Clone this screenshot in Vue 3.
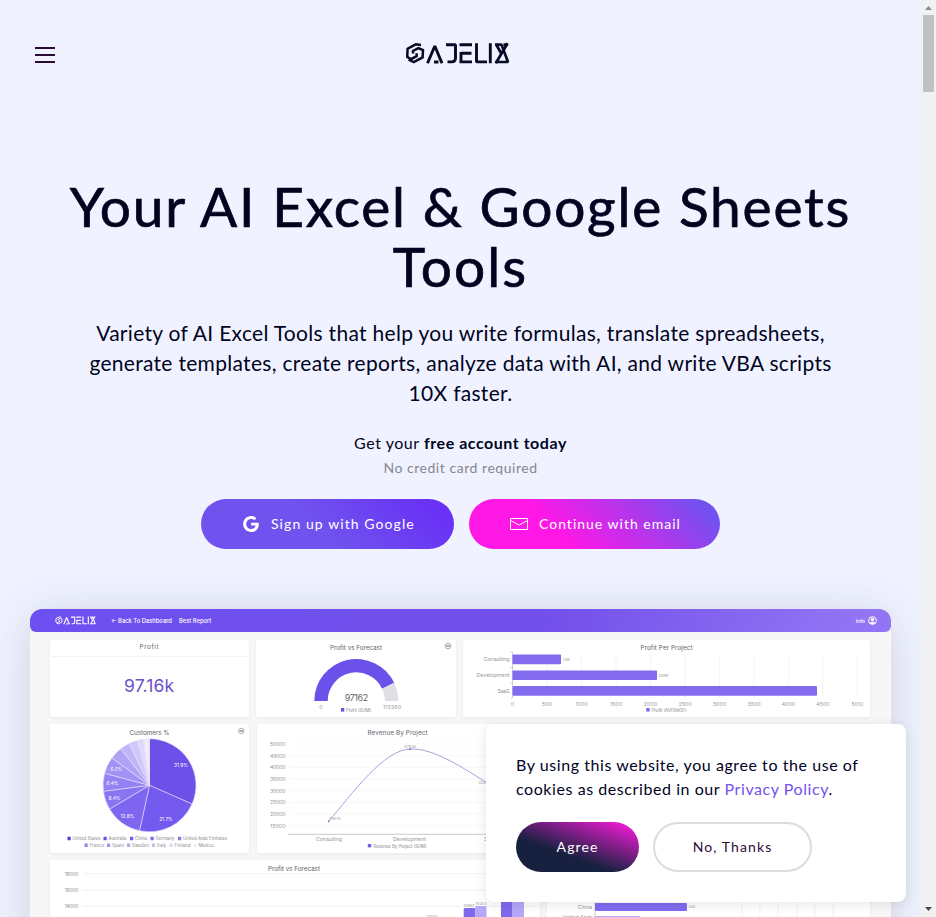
<script setup>
const polar = (cx, cy, r, deg) => {
  const a = ((deg - 90) * Math.PI) / 180
  return `${(cx + r * Math.cos(a)).toFixed(2)} ${(cy + r * Math.sin(a)).toFixed(2)}`
}

const pieStops = [0, 113.8, 192.4, 239.3, 262.6, 285, 306, 321.8, 334.2, 345, 352.5, 360]
const pieColors = ['#6c50e8', '#7459ee', '#7e66f0', '#8a74f1', '#9582f3', '#a292f4', '#b0a3f5', '#c0b5f7', '#d0c8f8', '#dfdaf9', '#eeebfc']
const slices = pieColors.map((color, i) => {
  const from = pieStops[i]
  const to = pieStops[i + 1]
  return { color, d: `M149.5 785.3L${polar(149.5, 785.3, 46.5, from)}A46.5 46.5 0 0 1 ${polar(149.5, 785.3, 46.5, to)}Z` }
})
const pieLabels = [
  { t: '31.9%', x: 181, y: 767 },
  { t: '21.7%', x: 166, y: 820.5 },
  { t: '12.8%', x: 127.5, y: 817.5 },
  { t: '8.4%', x: 114.5, y: 800 },
  { t: '6.4%', x: 112.5, y: 785 },
  { t: '6.0%', x: 116.5, y: 771 },
]
const pieLegend = [
  { t: 'United States', x: 67.5, y: 838.5, w: 28, c: '#5a3fd0' },
  { t: 'Australia', x: 103.5, y: 838.5, w: 18, c: '#6c50e8' },
  { t: 'China', x: 130, y: 838.5, w: 12, c: '#7459ee' },
  { t: 'Germany', x: 150.5, y: 838.5, w: 19, c: '#7e66f0' },
  { t: 'United Arab Emirates', x: 178, y: 838.5, w: 44, c: '#8a74f1' },
  { t: 'France', x: 84.5, y: 845.3, w: 15, c: '#9582f3' },
  { t: 'Spain', x: 107, y: 845.3, w: 12, c: '#a292f4' },
  { t: 'Sweden', x: 127, y: 845.3, w: 17, c: '#b0a3f5' },
  { t: 'Italy', x: 152, y: 845.3, w: 9, c: '#c6bdf7' },
  { t: 'Finland', x: 169.5, y: 845.3, w: 16, c: '#dcd8f6' },
  { t: 'Mexico', x: 193.5, y: 845.3, w: 15, c: '#eeecf8' },
]

const hBars = [
  { t: 'Consulting', y: 659.4, end: 561, v: '709', lw: 26 },
  { t: 'Development', y: 675.2, end: 657, v: '2099', lw: 33 },
  { t: 'SaaS', y: 690.9, end: 817, v: '', lw: 12 },
]
const hTicks = [0, 500, 1000, 1500, 2000, 2500, 3000, 3500, 4000, 4500, 5000].map((v) => ({ v: v === 5000 ? '500(' : v, x: 512.5 + v * 0.069 }))
const revTicks = [50000, 45000, 40000, 35000, 30000, 25000, 20000, 15000].map((v, i) => ({ v, y: 744 + i * 11.65 }))
const fcTicks = [18000, 16000, 14000].map((v, i) => ({ v, y: 873.7 + i * 16.3 }))
const fcGrid = [742, 760, 778, 797, 815, 833]
</script>

<template>
  <div class="window">
    <main class="page">
      <header class="site-header">
        <button class="menu" aria-label="Menu"><span></span><span></span><span></span></button>
        <svg class="logo" viewBox="0 0 105 24" width="105" height="24">
          <defs>
            <g id="ajelix" fill="none" stroke="currentColor">
              <path stroke-width="2.5" d="M16 2.900 10.800 2.300 2.600 6.700 2.200 14.800 5.900 17.200 11.600 14.200V11.200M8 11.600V8.900L13.400 6.100 18 8 17.600 15.400 8.800 20.100 3.600 17.600" />
              <path stroke-width="2.9" stroke-linejoin="bevel" d="M22.500 21.300 29.800 4 37 21.300M29 20H33.500M41 2.700H50.500V16Q50.500 19.900 46.500 19.900H42.500M54.500 2.700H67M56 11.300H66.500M54.500 19.900H67M56 10V19.900M71.500 1.300V19.900H82M85.300 1.300V21.300" />
              <path stroke-width="2.700" stroke-linejoin="bevel" d="M90 2.600H96.500L103 20H97M90.800 21.300 102.600 1.300M90 20H97M91.500 3 96 11M98.500 2.600H103" />
            </g>
          </defs>
          <use href="#ajelix" />
        </svg>
      </header>

      <section class="hero">
        <h1><span class="h-a">Your AI Excel &amp; Google Sheets</span><span class="h-b">Tools</span></h1>
        <p class="lead">
          <span class="l-a">Variety of AI Excel Tools that help you write formulas, translate spreadsheets,</span>
          <span class="l-b">generate templates, create reports, analyze data with AI, and write VBA scripts</span>
          <span class="l-c">10X faster.</span>
        </p>
        <p class="account">Get your <b>free account today</b></p>
        <p class="note">No credit card required</p>
        <div class="cta">
          <a class="btn google">
            <svg width="16" height="16" viewBox="0 0 24 24"><path fill="#fff" d="M12.240 10.285V14.400h6.806c-.275 1.765-2.056 5.174-6.806 5.174-4.095 0-7.439-3.389-7.439-7.574s3.345-7.574 7.439-7.574c2.330 0 3.891.989 4.785 1.849l3.254-3.138C18.189 1.186 15.479 0 12.240 0c-6.635 0-12 5.365-12 12s5.365 12 12 12c6.926 0 11.520-4.869 11.520-11.726 0-.788-.085-1.390-.189-1.989H12.240z" /></svg>
            <span>Sign up with Google</span>
          </a>
          <a class="btn email">
            <svg width="18" height="12" viewBox="0 0 18 12"><path d="M.5.5H17.5V11.5H.5ZM.8 2.6 9 7.2 17.2 2.6" fill="none" stroke="#fff" stroke-width="1" /></svg>
            <span>Continue with email</span>
          </a>
        </div>
      </section>

      <section class="board">
        <div class="board-bar">
          <svg class="mini-logo" viewBox="0 0 105 24" width="41" height="9.4"><use href="#ajelix" /></svg>
          <span class="back">← Back To Dashboard</span>
          <span class="rep">Best Report</span>
          <span class="info">Info</span>
          <svg class="avatar" width="9" height="9" viewBox="0 0 18 18"><circle cx="9" cy="9" r="7.8" fill="none" stroke="#fff" stroke-width="2" /><circle cx="9" cy="7" r="3.5" fill="#fff" /><path d="M3.5 14Q9 8.500 14.500 14L9 17Z" fill="#fff" /></svg>
        </div>
        <div class="cards">
          <div class="row r1">
            <svg class="card" viewBox="50 640 199 77" width="199" height="77">
              <path d="M51 656.5H249" stroke="#f3f3f5" />
              <text x="149" y="649" class="title" textLength="19">Profit</text>
              <text x="149" y="692" class="big" textLength="50">97.16k</text>
            </svg>
            <svg class="card" viewBox="256 640 200 77" width="200" height="77">
              <text x="356" y="649.7" class="title" textLength="52">Profit vs Forecast</text>
              <g fill="none" stroke="#8a8a92" stroke-width=".7"><circle cx="448" cy="646" r="2.8" /><path d="M446.400 646H449.700" stroke-width="1.400" /></g>
              <path :d="`M314.300 701A42 42 0 0 1 ${polar(356.300, 701, 42, 64.400)}L${polar(356.300, 701, 28.600, 64.400)}A28.600 28.600 0 0 0 327.700 701Z`" fill="#6c50ea" />
              <path :d="`M${polar(356.300, 701, 42, 64.400)}A42 42 0 0 1 398.300 701H384.900A28.600 28.600 0 0 0 ${polar(356.300, 701, 28.600, 64.400)}Z`" fill="#dfdfe4" />
              <text x="356.500" y="701" class="gauge" textLength="23.500">97162</text>
              <text x="321" y="709" class="ax">0</text>
              <text x="392" y="709" class="ax" textLength="18">113260</text>
              <rect x="341" y="708" width="3.300" height="3.600" fill="#6c50ea" />
              <text x="346" y="711.700" class="leg" textLength="25">Profit (SUM)</text>
            </svg>
            <svg class="card" viewBox="463 640 407 77" width="407" height="77">
              <text x="666.500" y="649.700" class="title" textLength="52">Profit Per Project</text>
              <path v-for="k in hTicks" :key="'g' + k.x" :d="`M${k.x} 655V697`" stroke="#f1f1f4" stroke-width=".8" />
              <path d="M512.500 652V698M510.500 652H512.500M510.500 667.500H512.500M510.500 683H512.500M510.500 698H512.500" stroke="#bbb" stroke-width=".7" fill="none" />
              <g v-for="b in hBars" :key="b.t">
                <rect x="512.500" :y="b.y - 4.800" :width="b.end - 512.500" height="9.600" rx="1" fill="#836bf0" />
                <text x="509.500" :y="b.y + 1.800" class="ax end" :textLength="b.lw">{{ b.t }}</text>
                <text :x="b.end + 1.500" :y="b.y + 1.500" class="tiny start">{{ b.v }}</text>
              </g>
              <text v-for="k in hTicks" :key="k.x" :x="k.x" y="705.500" class="ax">{{ k.v }}</text>
              <rect x="646.200" y="708" width="3.500" height="3.600" fill="#836bf0" />
              <text x="651.500" y="711.700" class="leg" textLength="35">Profit (AVERAGE)</text>
            </svg>
          </div>
          <div class="row r2">
            <svg class="card" viewBox="50 724 199 129" width="199" height="129">
              <text x="149.500" y="735" class="title" textLength="40">Customers %</text>
              <g fill="none" stroke="#8a8a92" stroke-width=".7"><circle cx="241.300" cy="731" r="2.700" /><path d="M239.800 731H242.900" stroke-width="1.500" /></g>
              <path v-for="s in slices" :key="s.d" :d="s.d" :fill="s.color" stroke="#e5e0fc" stroke-width=".6" />
              <text v-for="l in pieLabels" :key="l.t" :x="l.x" :y="l.y" class="plabel">{{ l.t }}</text>
              <g v-for="l in pieLegend" :key="l.t">
                <rect :x="l.x" :y="l.y - 1.700" width="3.200" height="3.400" rx=".5" :fill="l.c" />
                <text :x="l.x + 5" :y="l.y + 1.700" class="leg" :textLength="l.w">{{ l.t }}</text>
              </g>
            </svg>
            <svg class="card" viewBox="257 724 613 129" width="613" height="129">
              <text x="397.500" y="735" class="title" textLength="60">Revenue By Project</text>
              <g v-for="k in revTicks" :key="k.v">
                <path :d="`M290 ${k.y}H860`" stroke="#f3f3f5" stroke-width=".7" />
                <text x="285.500" :y="k.y + 2" class="ax end" textLength="15.500">{{ k.v }}</text>
              </g>
              <path d="M288 834.300H860" stroke="#bcbcc2" stroke-width=".8" />
              <path d="M328.500 821.500C352 794 384 749 411 749C433 748 464 768 490 785" fill="none" stroke="#a79fdb" stroke-width="1" />
              <circle cx="328.700" cy="821.300" r=".9" fill="#716a9c" /><circle cx="410" cy="749.200" r=".9" fill="#716a9c" />
              <text x="335" y="820" class="tiny">16674</text>
              <text x="410" y="747.500" class="tiny">47936</text>
              <text x="484" y="784" class="tiny">32587</text>
              <text x="329" y="841.300" class="ax" textLength="26">Consulting</text>
              <text x="409.500" y="841.300" class="ax" textLength="33">Development</text>
              <text x="490.500" y="841.300" class="ax" textLength="13">SaaS</text>
              <rect x="367.800" y="844" width="3.500" height="3.400" fill="#7563dd" />
              <text x="373.500" y="847.600" class="leg" textLength="53">Revenue By Project (SUM)</text>
            </svg>
          </div>
          <div class="row r3">
            <svg class="card" viewBox="50 860 490 80" width="490" height="80">
              <text x="294" y="871" class="title" textLength="52">Profit vs Forecast</text>
              <g v-for="k in fcTicks" :key="k.v">
                <path :d="`M83 ${k.y}H540`" stroke="#ededf0" stroke-width=".8" />
                <text x="78.500" :y="k.y + 1.900" class="ax end" textLength="14">{{ k.v }}</text>
              </g>
              <rect x="463.700" y="908" width="11.500" height="30" rx="1" fill="#7f68eb" />
              <rect x="475.200" y="906" width="11.300" height="30" rx="1" fill="#b5a7fa" />
              <rect x="501" y="900" width="11" height="30" fill="#7f68eb" />
              <rect x="512" y="898" width="12" height="30" fill="#b5a7fa" />
              <text x="469" y="907" class="tiny">13967</text>
              <text x="481" y="905" class="tiny">14054</text>
              <text x="432" y="917.500" class="tiny">12805</text>
            </svg>
            <svg class="card" viewBox="547 860 323 80" width="323" height="80">
              <path v-for="x in fcGrid" :key="x" :d="`M${x} 870V917`" stroke="#ededf1" stroke-width=".7" />
              <path d="M595 870V917" stroke="#bbb" stroke-width=".7" />
              <rect x="595" y="903" width="92" height="8" rx="1" fill="#836bf0" />
              <rect x="595" y="916" width="45" height="8" fill="#b5a7fa" />
              <text x="592" y="908.500" class="ax end">China</text>
              <text x="592" y="919" class="ax end">United Arab</text>
              <text x="688" y="908.300" class="tiny start">350</text>
            </svg>
          </div>
        </div>
      </section>
    </main>

    <aside class="cookie">
      <p><span class="c-a">By using this website, you agree to the use of</span><span class="c-b">cookies as described in our <a>Privacy Policy</a>.</span></p>
      <div class="actions"><button class="agree">Agree</button><button class="decline">No, Thanks</button></div>
    </aside>

    <div class="scrollbar">
      <svg width="7" height="4" viewBox="0 0 7 4"><path d="M0 4 3.500 0 7 4Z" fill="#8c8c8c" /></svg>
      <div class="thumb"></div>
      <svg class="down" width="7" height="4" viewBox="0 0 7 4"><path d="M0 0H7L3.500 4Z" fill="#484848" /></svg>
    </div>
  </div>
</template>

<style>
body {
  overflow: hidden;
  background: #f0f3ff;
}
</style>

<style scoped>
.window {
  position: relative;
  display: flex;
  width: 936px;
  height: 917px;
  overflow: hidden;
  background: #f0f3ff;
  color: #01031f;
  font-family: Lato, 'Liberation Sans', sans-serif;
}
.page {
  width: 921px;
  height: 917px;
  flex: none;
  overflow: hidden;
}
.site-header {
  display: grid;
  grid-template-columns: 20px 1fr 20px;
  align-items: center;
  height: 110px;
  padding: 0 35px;
  box-sizing: border-box;
}
.menu {
  display: flex;
  flex-direction: column;
  gap: 5px;
  padding: 0;
  border: 0;
  background: none;
}
.menu span {
  width: 20px;
  height: 2px;
  background: #2b0b36;
}
.logo {
  display: block;
  justify-self: center;
  margin: -2px 6px 0 0;
  color: #070a24;
}
.hero {
  display: flex;
  flex-direction: column;
  align-items: center;
  padding-top: 66px;
}
h1,
p {
  margin: 0;
  white-space: nowrap;
}
h1 span,
.lead span,
.cookie p span {
  display: block;
}
h1 {
  font-weight: 400;
  font-size: 55px;
  line-height: 60px;
  text-align: center;
  -webkit-text-stroke: 0.7px #01031f;
}
.h-a {
  letter-spacing: 1.8px;
}
.h-b {
  letter-spacing: 2.1px;
}
.lead {
  margin-top: 22px;
  font-size: 21px;
  line-height: 30px;
  text-align: center;
}
.l-a,
.l-b,
.l-c {
  letter-spacing: 0.3px;
}
.account {
  margin-top: 23px;
  font-size: 16px;
  line-height: 24px;
  letter-spacing: 0.54px;
}
.note {
  margin-top: 1px;
  font-size: 14px;
  line-height: 24px;
  letter-spacing: 0.54px;
  color: #85868f;
}
.cta {
  display: flex;
  gap: 15px;
  margin-top: 19px;
}
.btn {
  display: flex;
  align-items: center;
  height: 50px;
  box-sizing: border-box;
  border-radius: 25px;
  color: #fff;
  font-size: 14px;
  letter-spacing: 1px;
  white-space: nowrap;
}
.btn span {
  padding-bottom: 2px;
}
.google {
  width: 253px;
  padding-left: 42px;
  gap: 12px;
  letter-spacing: 1.08px;
  background: linear-gradient(45deg, #7053ee 45%, #6932f5 90%);
}
.email {
  width: 251px;
  padding-left: 41px;
  gap: 11px;
  background: linear-gradient(45deg, #ff17e6 35%, #7251f0 92%);
}
.board {
  width: 861px;
  height: 700px;
  margin: 60px 0 0 30px;
  border-radius: 12px 12px 0 0;
  background: #f7f7f8;
  box-shadow: 0 5px 50px rgba(50, 50, 80, 0.17);
}
.board-bar {
  display: flex;
  align-items: center;
  height: 23px;
  padding: 0 14px 0 25px;
  border-radius: 12px 12px 6px 6px;
  background: linear-gradient(100deg, #6d50f1 0%, #7350ea 60%, #9175f5 96%);
  color: #fff;
  font: 500 5.8px Inter, sans-serif;
}
.mini-logo {
  margin-right: 15px;
}
.back {
  width: 68px;
}
.info {
  margin-left: auto;
  margin-right: 3px;
  font-size: 5px;
}
.cards {
  display: flex;
  flex-direction: column;
  gap: 7px;
  padding: 8px 20px 0;
}
.row {
  display: flex;
  gap: 7px;
}
.r2 {
  gap: 8px;
}
.card {
  display: block;
  flex: none;
  border-radius: 3px;
  background: #fff;
  box-shadow: 0 1px 4px rgba(0, 0, 0, 0.06);
}
.card text {
  font-family: Inter, sans-serif;
  text-anchor: middle;
  fill: #98989e;
}
.card .title {
  font-size: 6.4px;
  fill: #66666c;
}
.card .big {
  font-size: 17.5px;
  fill: #6b51c9;
}
.card .gauge {
  font-size: 9px;
  fill: #66666a;
}
.card .ax {
  font-size: 5.3px;
}
.card .leg {
  font-size: 4.3px;
  text-anchor: start;
  fill: #85858c;
}
.card .tiny {
  font-size: 3.9px;
}
.card .end {
  text-anchor: end;
}
.card .start {
  text-anchor: start;
}
.card .plabel {
  font-size: 4.8px;
  fill: #fff;
}
.cookie {
  position: absolute;
  left: 486px;
  top: 724px;
  width: 420px;
  height: 178px;
  padding: 29px 30px;
  box-sizing: border-box;
  border-radius: 8px;
  background: #fff;
  box-shadow: 0 2px 12px rgba(0, 0, 0, 0.1);
  font-size: 16px;
  line-height: 24px;
}
.c-a,
.c-b {
  letter-spacing: 0.57px;
}
.cookie a {
  color: #7551ee;
}
.actions {
  display: flex;
  gap: 14px;
  margin-top: 21px;
}
.actions button {
  height: 50px;
  padding: 0 0 2px;
  border: 0;
  border-radius: 25px;
  font: 14px Lato, sans-serif;
  letter-spacing: 1.1px;
}
.actions .agree {
  width: 123px;
  background: linear-gradient(20deg, #17213f 37%, #e81bd0 92%);
  color: #fff;
}
.actions .decline {
  width: 159px;
  border: 2px solid #dcdcdc;
  background: #fff;
  color: #2b0b36;
}
.scrollbar {
  display: flex;
  flex-direction: column;
  align-items: center;
  width: 15px;
  height: 917px;
  padding: 6px 0;
  box-sizing: border-box;
  background: #f1f1f1;
  box-shadow: -1px 0 2px #f1f1f1;
}
.thumb {
  width: 11px;
  height: 77px;
  margin-top: 5px;
  background: #c1c1c1;
}
.down {
  margin-top: auto;
}
</style>
